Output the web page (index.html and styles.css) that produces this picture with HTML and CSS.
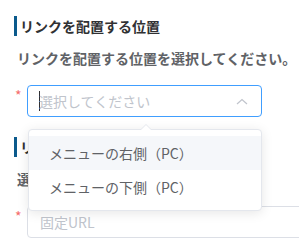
FILE: index.html
```html
<!DOCTYPE html>
<html lang="ja">
<head>
<meta charset="utf-8">
<link rel="stylesheet" href="styles.css">
</head>
<body>
<div class="page">
  <section class="section">
    <h2 class="heading">リンクを配置する位置</h2>
    <p class="desc">リンクを配置する位置を選択してください。</p>
    <div class="row">
      <span class="req">*</span>
      <div class="select is-focus">
        <div class="input">
          <span class="caret"></span><span class="placeholder">選択してください</span>
          <svg class="chev" width="12" height="7" viewBox="0 0 12 7"><polyline points="1,6 6,1.5 11,6" fill="none" stroke="#c0c4cc" stroke-width="1.2"/></svg>
        </div>
        <div class="dropdown">
          <span class="arrow"></span>
          <ul class="list">
            <li class="item hover">メニューの右側（PC）</li>
            <li class="item">メニューの下側（PC）</li>
          </ul>
        </div>
      </div>
    </div>
  </section>
  <section class="section">
    <h2 class="heading">リンク先</h2>
    <p class="desc">選択してください。</p>
    <div class="row">
      <span class="req">*</span>
      <div class="text-input"><span class="placeholder">固定URL</span></div>
    </div>
  </section>
</div>
</body>
</html>
```

FILE: styles.css
```css
html, body {
  margin: 0;
  padding: 0;
  background: #ffffff;
  overflow: hidden;
}
body {
  font-family: "Noto Sans CJK JP", "Noto Sans", sans-serif;
  font-size: 14px;
  width: 299px;
  height: 246px;
}
.page {
  padding: 16px 0 0 14px;
}
.section {
  margin-bottom: 20px;
}
.heading {
  margin: 0 0 12px 0;
  height: 20px;
  line-height: 20px;
  font-size: 14px;
  font-weight: 700;
  color: #303133;
  border-left: 3px solid #0b5a8c;
  padding-left: 3px;
}
.desc {
  margin: 0 0 17px 3px;
  height: 20px;
  line-height: 20px;
  font-size: 14px;
  font-weight: 700;
  color: #606266;
  white-space: nowrap;
}
.row {
  display: flex;
  align-items: flex-start;
}
.req {
  width: 13px;
  flex: none;
  color: #f56c6c;
  font-size: 14px;
  line-height: 20px;
  padding-left: 1px;
  box-sizing: border-box;
}
.select {
  position: relative;
  width: 235px;
}
.input {
  height: 32px;
  box-sizing: border-box;
  border: 1px solid #409eff;
  border-radius: 4px;
  display: flex;
  align-items: center;
  padding: 0 13px 0 11px;
  background: #fff;
}
.caret {
  display: inline-block;
  width: 1px;
  height: 20px;
  background: #303133;
  margin-right: -1px;
}
.placeholder {
  color: #c0c4cc;
  font-size: 14px;
  flex: 1;
  white-space: nowrap;
}
.chev {
  flex: none;
}
.dropdown {
  position: absolute;
  left: 1px;
  top: 44px;
  width: 234px;
  box-sizing: border-box;
  background: #fff;
  border: 1px solid #e4e7ed;
  border-radius: 4px;
  box-shadow: 0 2px 12px 0 rgba(0, 0, 0, 0.1);
  z-index: 10;
}
.arrow {
  position: absolute;
  top: -6px;
  left: 111px;
  width: 0;
  height: 0;
  border-left: 6px solid transparent;
  border-right: 6px solid transparent;
  border-bottom: 6px solid #e4e7ed;
}
.arrow::after {
  content: "";
  position: absolute;
  left: -6px;
  top: 1px;
  border-left: 6px solid transparent;
  border-right: 6px solid transparent;
  border-bottom: 6px solid #fff;
}
.list {
  list-style: none;
  margin: 0;
  padding: 6px 0;
}
.item {
  height: 34px;
  line-height: 34px;
  padding: 0 20px;
  color: #606266;
  font-size: 14px;
  white-space: nowrap;
}
.item.hover {
  background: #f5f7fa;
}
.text-input {
  flex: none;
  width: 320px;
  height: 32px;
  box-sizing: border-box;
  border: 1px solid #dcdfe6;
  border-radius: 4px;
  display: flex;
  align-items: center;
  padding: 0 12px;
}
```
